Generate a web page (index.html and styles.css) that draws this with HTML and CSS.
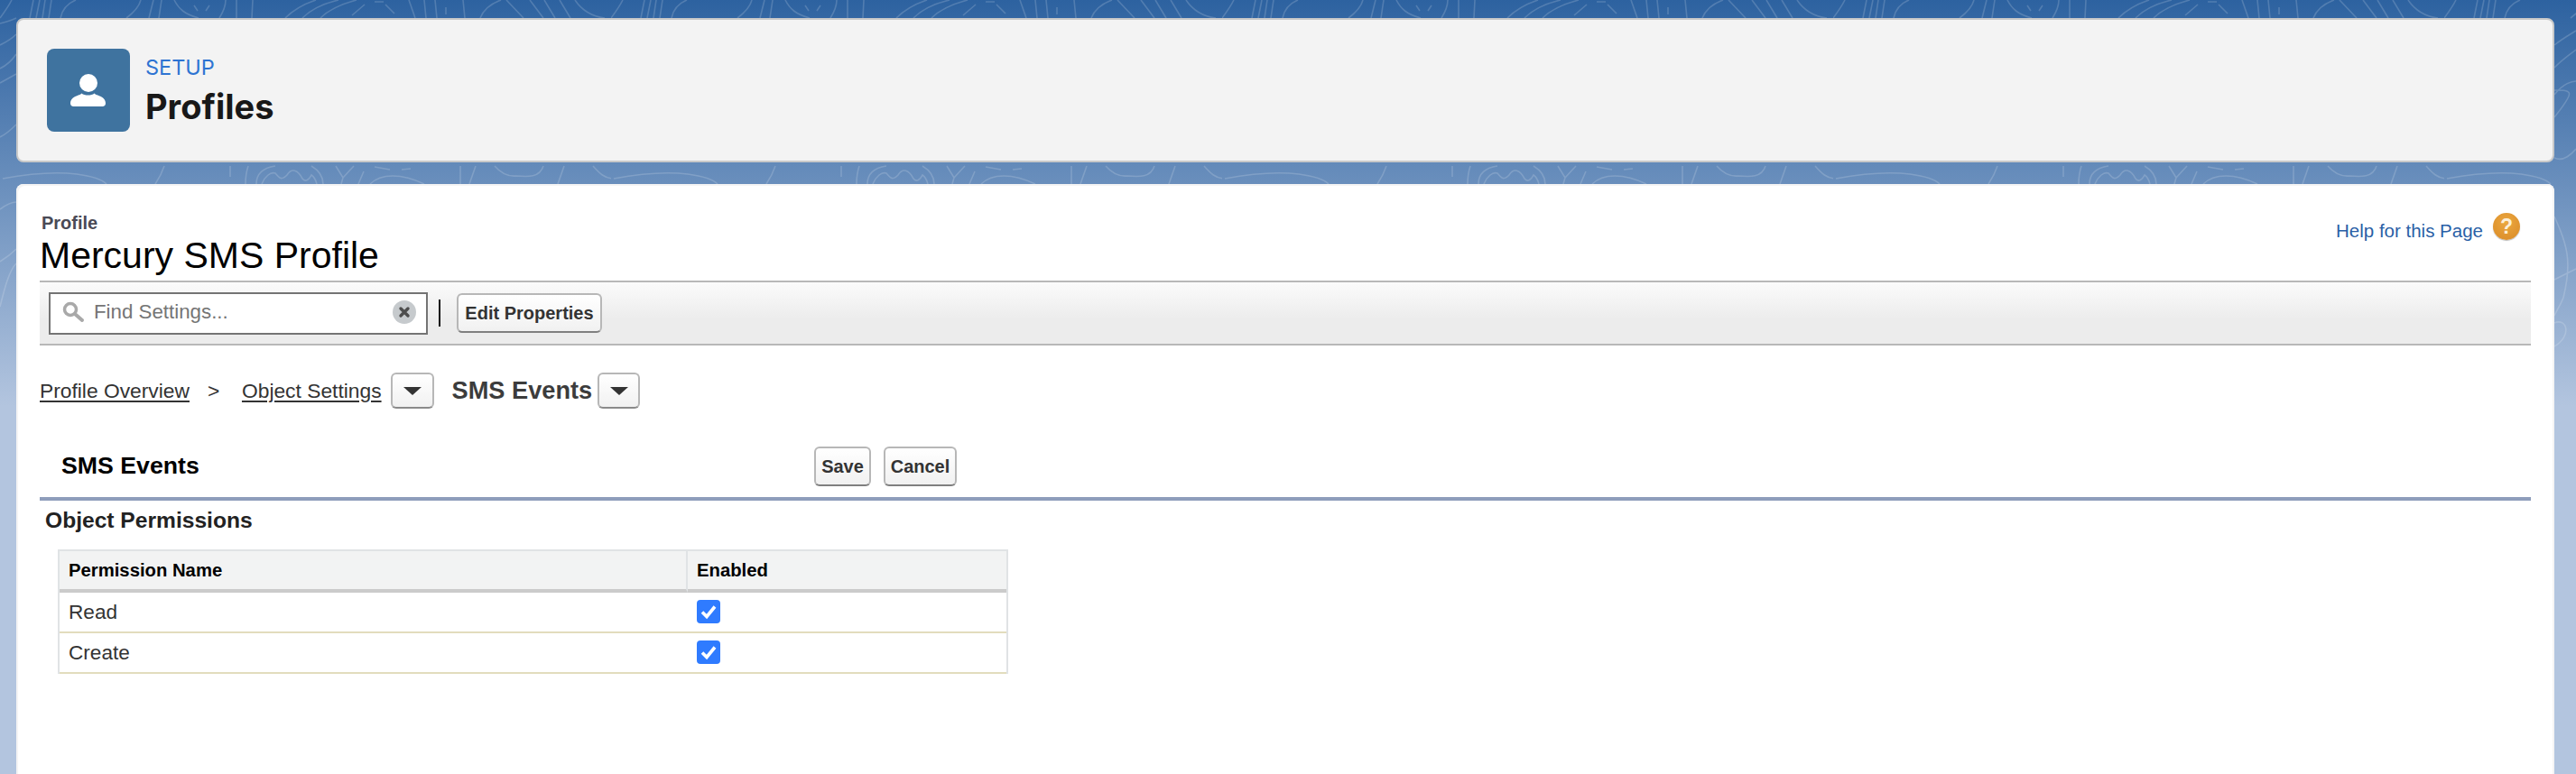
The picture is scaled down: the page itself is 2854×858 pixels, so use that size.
FILE: index.html
```html
<!DOCTYPE html>
<html lang="en">
<head>
<meta charset="utf-8">
<title>Profiles</title>
<link rel="stylesheet" href="styles.css">
</head>
<body>
<svg class="topo" viewBox="0 0 2854 858" aria-hidden="true">
  <defs>
    <pattern id="topo-tile" x="0" y="0" width="677" height="858" patternUnits="userSpaceOnUse">
      <g fill="none" stroke="#fff" stroke-width="1.600">
        <path d="M0 20C6 12 10 6 13 0M33 20L37 0M40 20L44 0M47 20L50 0M54 20L57 0M67 20C69 10 74 4 84 0M140 20C148 14 154 8 156 0M165 20L170 0M176 20L179 0M193 0C198 10 205 16 220 20M215 6L219 12M228 12L232 6M243 20C248 12 250 6 250 0M262 0L262 20M280 0L279 20M316 20C326 10 338 4 350 0M335 20C345 10 358 4 375 0M355 20C365 10 380 4 395 0M390 17L404 5M415 2L425 2M427 5L437 15M453 0L460 20M470 0L472 20M482 0L484 20M494 8L494 16M513 0L515 20M532 20C536 10 544 4 555 0M561 0L580 20M587 0L602 20M603 0L615 20M620 0L632 20M637 0C645 12 655 18 670 20"/>
        <path d="M3 198C30 193 60 190 85 193C100 195 112 198 118 204M172 204C176 198 180 190 182 184M255 184L255 196M272 204C272 196 273 190 275 184M284 204C284 192 292 186 305 184M345 184C355 190 358 197 358 204M290 204C293 196 300 190 305 192C310 198 312 200 318 194C323 186 330 188 335 198C338 202 342 200 345 194C348 196 350 200 351 204M372 184L380 197L392 184M380 197L378 204M397 204L403 190M415 185L432 188M445 188L455 187M410 204C422 192 445 192 470 204M510 184L510 204M527 184L520 204M548 184C555 192 562 196 572 195C585 196 598 197 602 184M625 184L618 204M657 184C664 192 670 198 680 198"/>
      </g>
    </pattern>
  </defs>
  <rect width="2854" height="210" fill="url(#topo-tile)"/>
  <g fill="none" stroke="#fff" stroke-width="1.600">
    <path d="M0 26C8 24 14 22 18 20M0 50C8 46 14 42 18 38M0 76C8 72 14 66 18 60M0 92L18 82M0 152C8 148 14 142 18 138M0 232C8 226 14 224 18 224M0 290C8 285 14 280 18 276M0 340C5 320 10 300 18 292"/>
    <path d="M2830 50C2840 42 2848 38 2854 34M2830 75C2840 65 2848 60 2854 55M2830 105C2840 92 2850 90 2854 90M2830 130C2854 100 2850 100 2830 100M2830 175C2840 180 2850 170 2854 165M2830 240C2844 270 2850 290 2840 330C2836 340 2832 345 2830 350M2830 310C2840 305 2850 300 2854 298M2830 358C2844 352 2850 372 2830 384"/>
  </g>
</svg>

<header class="page-header">
  <div class="header-icon">
    <svg viewBox="0 0 92 92" width="92" height="92" aria-hidden="true">
      <circle cx="46" cy="38" r="10" fill="#fff"/>
      <path d="M26 60.500c0-4 3-6.600 6.500-8 3.500-1.400 5-1.800 6-3 3 2.800 11 2.800 14 0 1 1.200 2.500 1.600 6 3 3.500 1.400 6.500 4 6.500 8 0 2-1.300 3.500-3.500 3.500h-32c-2.200 0-3.500-1.500-3.500-3.500z" fill="#fff"/>
    </svg>
  </div>
  <div class="header-text">
    <div class="eyebrow">SETUP</div>
    <h1 class="header-title">Profiles</h1>
  </div>
</header>

<main class="content-card">
  <div class="title-row">
    <div>
      <div class="title-type">Profile</div>
      <h2 class="title-name">Mercury SMS Profile</h2>
    </div>
    <div class="help">
      <a class="help-link">Help for this Page</a>
      <span class="help-icon">?</span>
    </div>
  </div>

  <div class="toolbar">
    <div class="search">
      <svg class="search-icon" viewBox="0 0 26 26" width="26" height="26" aria-hidden="true">
        <circle cx="10" cy="10" r="6.500" fill="none" stroke="#a9a9a9" stroke-width="3.500"/>
        <path d="M15 15l8 7" fill="none" stroke="#a9a9a9" stroke-width="4" stroke-linecap="round"/>
      </svg>
      <span class="search-text">Find Settings...</span>
      <svg class="clear-icon" viewBox="0 0 26 26" width="26" height="26" aria-hidden="true">
        <circle cx="13" cy="13" r="13" fill="#c6cacd"/>
        <path d="M9 9l8 8M17 9l-8 8" stroke="#4d4d4d" stroke-width="3.400" stroke-linecap="round"/>
      </svg>
    </div>
    <span class="separator"></span>
    <button class="btn btn-edit">Edit Properties</button>
  </div>

  <nav class="crumbs">
    <a class="crumb-link">Profile Overview</a>
    <span class="crumb-sep">&gt;</span>
    <a class="crumb-link">Object Settings</a>
    <button class="drop" aria-label="Show"><svg viewBox="0 0 22 10" width="22" height="10"><path d="M1 1h20l-10 9z" fill="#333"/></svg></button>
    <strong class="crumb-current">SMS Events</strong>
    <button class="drop drop-tight" aria-label="Show"><svg viewBox="0 0 22 10" width="22" height="10"><path d="M1 1h20l-10 9z" fill="#333"/></svg></button>
  </nav>

  <div class="block-head">
    <h3 class="block-title">SMS Events</h3>
    <div class="block-buttons">
      <button class="btn btn-save">Save</button>
      <button class="btn btn-cancel">Cancel</button>
    </div>
  </div>

  <h4 class="section-title">Object Permissions</h4>

  <table class="perm-table">
    <thead>
      <tr><th class="col-name">Permission Name</th><th class="col-enabled">Enabled</th></tr>
    </thead>
    <tbody>
      <tr>
        <td>Read</td>
        <td><span class="check"><svg viewBox="0 0 26 26" width="26" height="26"><path d="M6 13.500l5 5 9-11" fill="none" stroke="#fff" stroke-width="3.600"/></svg></span></td>
      </tr>
      <tr>
        <td>Create</td>
        <td><span class="check"><svg viewBox="0 0 26 26" width="26" height="26"><path d="M6 13.500l5 5 9-11" fill="none" stroke="#fff" stroke-width="3.600"/></svg></span></td>
      </tr>
    </tbody>
  </table>
</main>
</body>
</html>
```
FILE: styles.css
```css
* { box-sizing: border-box; }
html, body { height: 100%; }
body {
  margin: 0;
  height: 858px;
  overflow: hidden;
  position: relative;
  display: flex;
  flex-direction: column;
  gap: 24px;
  padding: 20px 24px 0 18px;
  background: linear-gradient(#2d62a0 0, #b3c5df 450px);
  font-family: "Liberation Sans", Arial, sans-serif;
  color: #333;
}
h1, h2, h3, h4 { margin: 0; }

.topo { position: absolute; left: 0; top: 0; width: 2854px; height: 858px; opacity: .17; }

.page-header {
  position: relative;
  flex: none;
  height: 160px;
  display: flex;
  align-items: center;
  gap: 17px;
  padding-left: 32px;
  background: #f3f3f3;
  border: 2px solid #c9c9c9;
  border-radius: 8px;
  font-family: Inter, "Liberation Sans", sans-serif;
}
.header-icon { width: 92px; height: 92px; border-radius: 8px; background: #3f739f; }
.header-icon svg { display: block; }
.header-text { padding-top: 1px; }
.eyebrow { font-size: 23.500px; line-height: 34px; color: #2e74d2; }
.header-title { margin-top: 1px; font-size: 38px; line-height: 50px; font-weight: 700; color: #181818; }

.content-card {
  position: relative;
  flex: 1;
  padding: 0 26px;
  background: #fff;
  border-radius: 8px 8px 0 0;
  box-shadow: inset 2px 2px 0 #f4f4f4, inset -2px 0 0 #f4f4f4;
}

.title-row {
  height: 107px;
  padding: 31px 12px 0 0;
  display: flex;
  justify-content: space-between;
}
.title-type { font-size: 20px; line-height: 24px; font-weight: 700; color: #4a4a56; padding-left: 2px; }
.title-name { margin-top: 2px; font-size: 41px; line-height: 44px; font-weight: 400; color: #000; }
.help { display: flex; align-items: flex-start; gap: 11px; padding-top: 1px; }
.help-link { font-size: 20.500px; line-height: 40px; color: #2a5fa6; }
.help-icon {
  width: 30px;
  height: 30px;
  border-radius: 50%;
  background: radial-gradient(circle at 50% 35%, #eba73f, #d98a26);
  color: #fdf0d8;
  font-size: 23px;
  font-weight: 700;
  line-height: 30px;
  text-align: center;
  box-shadow: 0 1px 1px #b9b9b9;
}

.toolbar {
  height: 72px;
  display: flex;
  align-items: center;
  padding-left: 10px;
  border-top: 2px solid #b8b8b8;
  border-bottom: 2px solid #b8b8b8;
  background: linear-gradient(#fbfbfb 0, #ececec 60%);
}
.search {
  width: 420px;
  height: 47px;
  display: flex;
  align-items: center;
  padding: 0 11px 2px 12px;
  background: #fff;
  border: 2px solid #747474;
}
.search-text { flex: 1; margin-left: 10px; font-size: 22.300px; color: #757575; }
.search-icon, .clear-icon { flex: none; }
.separator { width: 2px; height: 30px; margin: 0 18px 0 12px; background: #111; }

.btn {
  height: 44px;
  padding: 0;
  font-family: "Liberation Sans", Arial, sans-serif;
  font-size: 20px;
  font-weight: 700;
  color: #333;
  background: linear-gradient(#fff, #f1f1f1);
  border: 2px solid #b7b7b7;
  border-bottom-color: #7f7f7f;
  border-radius: 6px;
}
.btn-edit { width: 161px; }

.crumbs {
  height: 40px;
  margin-top: 30px;
  display: flex;
  align-items: center;
  font-size: 22.800px;
}
.crumb-link { color: #333; text-decoration: underline; text-decoration-thickness: 2px; text-underline-offset: 3px; }
.crumb-sep { width: 58px; padding-left: 20px; color: #333; }
.drop {
  width: 48px;
  height: 40px;
  margin-left: 10px;
  padding: 0;
  display: flex;
  align-items: center;
  justify-content: center;
  background: linear-gradient(#fff, #f1f1f1);
  border: 2px solid #b7b7b7;
  border-bottom-color: #8a8a8a;
  border-radius: 6px;
}
.drop-tight { margin-left: 6px; width: 47px; }
.crumb-current { margin-left: 20px; font-size: 27.200px; font-weight: 700; color: #3c3c3c; }

.block-head {
  height: 60px;
  margin-top: 42px;
  display: flex;
  padding: 0 0 0 24px;
  border-bottom: 4px solid #8e9dbb;
}
.block-title { width: 834px; font-size: 26.700px; line-height: 42px; color: #000; }
.block-buttons { display: flex; gap: 14px; }
.btn-save { width: 63px; }
.btn-cancel { width: 81px; }

.section-title {
  height: 54px;
  padding: 2px 0 0 6px;
  font-size: 24.600px;
  line-height: 40px;
  color: #222;
}

.perm-table {
  margin-left: 20px;
  width: 1053px;
  border-collapse: separate;
  border-spacing: 0;
  table-layout: fixed;
  border-left: 2px solid #e0e3e5;
  border-right: 2px solid #e0e3e5;
}
.perm-table th {
  height: 48px;
  padding: 0 0 0 10px;
  text-align: left;
  font-size: 20.300px;
  font-weight: 700;
  color: #000;
  background: #f2f3f3;
  border-top: 2px solid #e0e3e5;
  border-bottom: 4px solid #cbcbcb;
}
.perm-table .col-name { width: 696px; border-right: 2px solid #e0e3e5; }
.perm-table td {
  height: 45px;
  padding: 0 0 0 10px;
  font-size: 22.600px;
  color: #333;
  border-bottom: 2px solid #e2dcbd;
}
.check {
  display: block;
  width: 26px;
  height: 26px;
  margin-top: -2px;
  background: #2f7bff;
  border-radius: 4px;
}
.check svg { display: block; }
```
